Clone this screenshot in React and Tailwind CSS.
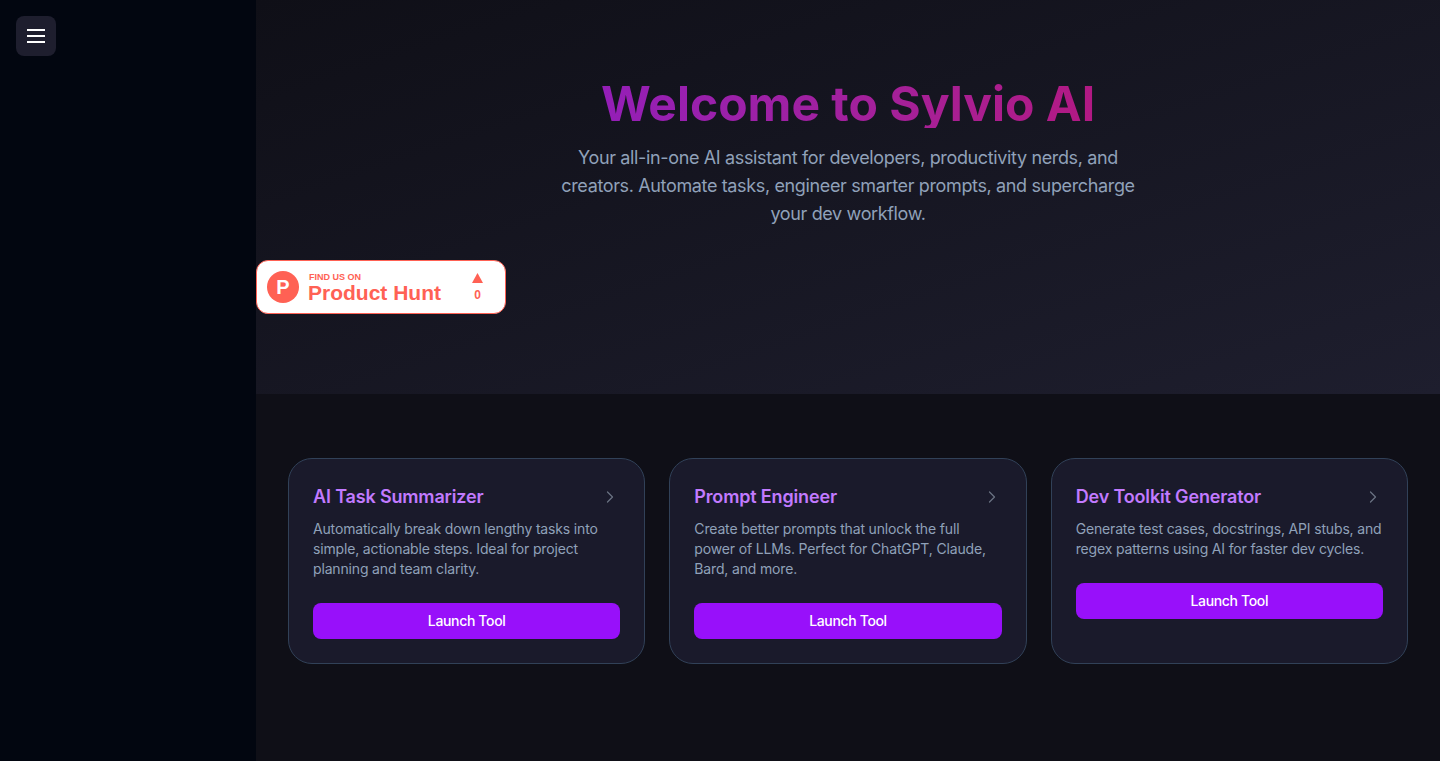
import { ChevronRight } from 'lucide-react'

const tools = [
  {
    title: 'AI Task Summarizer',
    text: 'Automatically break down lengthy tasks into simple, actionable steps. Ideal for project planning and team clarity.',
  },
  {
    title: 'Prompt Engineer',
    text: 'Create better prompts that unlock the full power of LLMs. Perfect for ChatGPT, Claude, Bard, and more.',
  },
  {
    title: 'Dev Toolkit Generator',
    text: 'Generate test cases, docstrings, API stubs, and regex patterns using AI for faster dev cycles.',
  },
]

function ProductHuntBadge() {
  return (
    <a className="flex h-[54px] w-[250px] items-center rounded-xl border border-[#ff6154] bg-white pl-2.5 pr-5.5 font-['Liberation_Sans',sans-serif] text-[#ff6154]">
      <span className="flex h-8 w-8 items-center justify-center rounded-full bg-[#ff6154] text-xl font-bold text-white">
        P
      </span>
      <span className="ml-2.25 flex flex-1 flex-col">
        <span className="ml-px text-[9px] leading-3 font-bold">FIND US ON</span>
        <span className="text-[21px] leading-5 font-bold">Product Hunt</span>
      </span>
      <span className="flex flex-col items-center gap-1.5">
        <svg width="11" height="10" viewBox="0 0 11 10" fill="currentColor">
          <path d="M5.5 0L11 10H0z" />
        </svg>
        <span className="text-xs leading-3 font-bold">0</span>
      </span>
    </a>
  )
}

function ToolCard({ title, text }) {
  return (
    <div className="rounded-3xl border border-slate-700 bg-[#1a1a2b] p-6 tracking-[-0.01em]">
      <div className="mb-2 flex items-center justify-between">
        <h3 className="text-lg font-semibold text-purple-400">{title}</h3>
        <ChevronRight className="h-5 w-5 text-gray-500" strokeWidth={1.5} />
      </div>
      <p className="mb-6 text-sm leading-5 text-slate-400">{text}</p>
      <button className="w-full rounded-lg bg-[#9810fa] py-2 text-sm font-medium tracking-tight text-white">
        Launch Tool
      </button>
    </div>
  )
}

export default function App() {
  return (
    <div className="flex min-h-screen bg-[#0f0f17] font-['Inter',sans-serif]">
      <aside className="w-64 shrink-0 bg-[#020610] p-4">
        <button className="flex h-10 w-10 items-center justify-center rounded-lg bg-[#1e1e2e] text-white">
          <svg width="24" height="24" viewBox="0 0 24 24" fill="none" stroke="currentColor" strokeWidth="2">
            <path d="M3 6h18M3 12h18M3 18h18" />
          </svg>
        </button>
      </aside>

      <main className="flex-1">
        <section className="bg-gradient-to-br from-[#0f0f17] to-[#1e1e2e] py-20">
          <div className="text-center">
            <h1 className="mb-4 bg-gradient-to-r from-purple-700 to-pink-700 bg-clip-text text-5xl leading-none font-bold text-transparent">
              <span className="inline-block">Welcome to Sylvio AI</span>
            </h1>
            <p className="mx-auto max-w-xl text-lg tracking-[-0.02em] text-slate-400">
              Your all-in-one AI assistant for developers, productivity nerds, and creators. Automate tasks, engineer
              smarter prompts, and supercharge your dev workflow.
            </p>
          </div>
          <div className="mt-8">
            <ProductHuntBadge />
          </div>
        </section>

        <section className="grid grid-cols-3 items-stretch gap-6 px-8 py-16">
          {tools.map((tool) => (
            <ToolCard key={tool.title} {...tool} />
          ))}
        </section>
      </main>
    </div>
  )
}
